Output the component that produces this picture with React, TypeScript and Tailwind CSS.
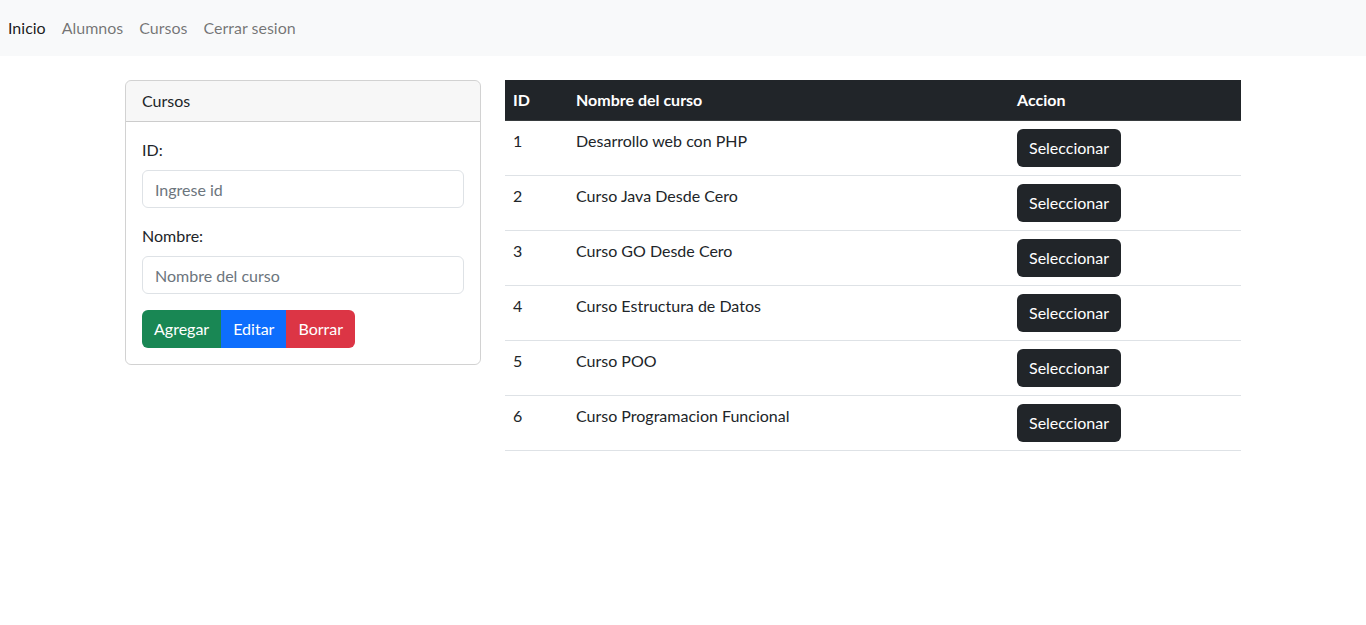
import React from "react";

const rows = [
  { id: 1, name: "Desarrollo web con PHP" },
  { id: 2, name: "Curso Java Desde Cero" },
  { id: 3, name: "Curso GO Desde Cero" },
  { id: 4, name: "Curso Estructura de Datos" },
  { id: 5, name: "Curso POO" },
  { id: 6, name: "Curso Programacion Funcional" },
];

export default function App() {
  return (
    <div
      className="min-h-screen bg-white text-[16px] leading-6 text-[#212529]"
      style={{ fontFamily: '"Lato", "Noto Sans", sans-serif' }}
    >
      <nav className="flex h-[56px] items-center bg-[#f8f9fa] py-2">
        <a className="px-2 py-2 text-[rgba(0,0,0,0.9)]">Inicio</a>
        <a className="px-2 py-2 text-[rgba(0,0,0,0.55)]">Alumnos</a>
        <a className="px-2 py-2 text-[rgba(0,0,0,0.55)]">Cursos</a>
        <a className="px-2 py-2 text-[rgba(0,0,0,0.55)]">Cerrar sesion</a>
      </nav>

      <div className="mx-auto mt-6 flex w-[1140px]">
        <div className="w-[380px] px-3">
          <div className="rounded-[6px] border border-[rgba(0,0,0,0.175)]">
            <div className="rounded-t-[5px] border-b border-[rgba(0,0,0,0.175)] bg-[rgba(0,0,0,0.03)] px-4 py-2">
              Cursos
            </div>
            <div className="p-4">
              <div className="mb-4">
                <label className="mb-2 block">ID:</label>
                <input
                  className="block h-[38px] w-full rounded-[6px] border border-[#dee2e6] px-3 text-[16px] placeholder:text-[#6c757d] outline-none"
                  placeholder="Ingrese id"
                />
              </div>
              <div className="mb-4">
                <label className="mb-2 block">Nombre:</label>
                <input
                  className="block h-[38px] w-full rounded-[6px] border border-[#dee2e6] px-3 text-[16px] placeholder:text-[#6c757d] outline-none"
                  placeholder="Nombre del curso"
                />
              </div>
              <div className="inline-flex">
                <button className="h-[38px] rounded-l-[6px] bg-[#198754] px-3 text-white">
                  Agregar
                </button>
                <button className="h-[38px] bg-[#0d6efd] px-3 text-white">
                  Editar
                </button>
                <button className="h-[38px] rounded-r-[6px] bg-[#dc3545] px-3 text-white">
                  Borrar
                </button>
              </div>
            </div>
          </div>
        </div>

        <div className="w-[760px] px-3">
          <table className="w-full border-collapse text-left">
            <thead>
              <tr className="bg-[#212529] font-bold text-white">
                <th className="w-[63px] border-b border-[#373b3e] px-2 py-2 align-top">ID</th>
                <th className="w-[441px] border-b border-[#373b3e] px-2 py-2 align-top">
                  Nombre del curso
                </th>
                <th className="border-b border-[#373b3e] px-2 py-2 align-top">Accion</th>
              </tr>
            </thead>
            <tbody>
              {rows.map((r) => (
                <tr key={r.id} className="border-b border-[#dee2e6]">
                  <td className="px-2 py-2 align-top">{r.id}</td>
                  <td className="px-2 py-2 align-top">{r.name}</td>
                  <td className="px-2 py-2 align-top">
                    <button className="h-[38px] rounded-[6px] bg-[#212529] px-3 text-white">
                      Seleccionar
                    </button>
                  </td>
                </tr>
              ))}
            </tbody>
          </table>
        </div>
      </div>
    </div>
  );
}
